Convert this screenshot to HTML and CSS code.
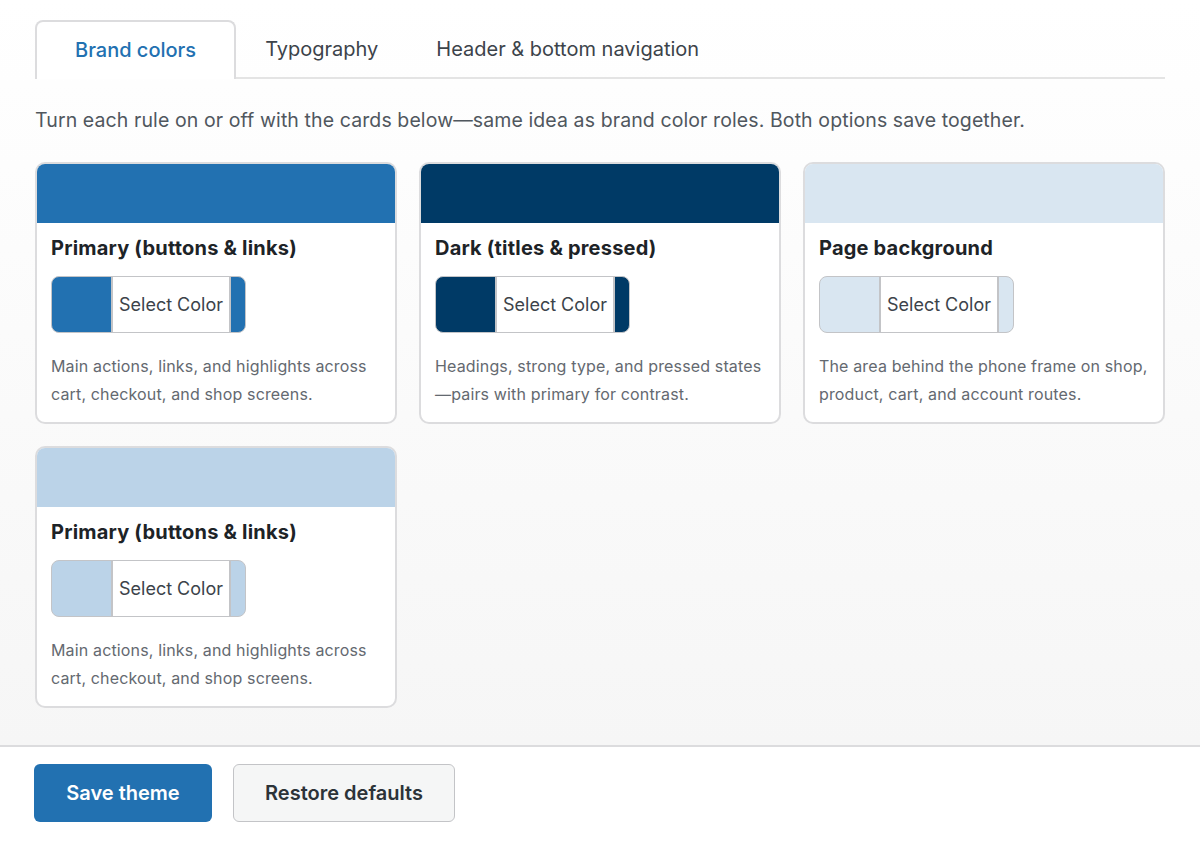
FILE: index.html
```html
<!DOCTYPE html>
<html lang="en">
<head>
<meta charset="utf-8">
<title>Theme settings</title>
<link rel="stylesheet" href="styles.css">
</head>
<body>
<div class="page">
  <main class="content">
    <nav class="tabs">
      <button class="tab tab-active">Brand colors</button>
      <button class="tab">Typography</button>
      <button class="tab">Header &amp; bottom navigation</button>
    </nav>

    <p class="intro">Turn each rule on or off with the cards below—same idea as brand color roles. Both options save together.</p>

    <section class="cards">
      <article class="card">
        <div class="band" style="background:#2271b1"></div>
        <div class="card-body">
          <h3 class="card-title">Primary (buttons &amp; links)</h3>
          <div class="picker" style="background:#2271b1"><span class="picker-label">Select Color</span></div>
          <p class="card-text">Main actions, links, and highlights across cart, checkout, and shop screens.</p>
        </div>
      </article>

      <article class="card">
        <div class="band" style="background:#003a66"></div>
        <div class="card-body">
          <h3 class="card-title">Dark (titles &amp; pressed)</h3>
          <div class="picker" style="background:#003a66"><span class="picker-label">Select Color</span></div>
          <p class="card-text">Headings, strong type, and pressed states —pairs with primary for contrast.</p>
        </div>
      </article>

      <article class="card">
        <div class="band" style="background:#d9e6f1"></div>
        <div class="card-body">
          <h3 class="card-title">Page background</h3>
          <div class="picker" style="background:#d9e6f1"><span class="picker-label">Select Color</span></div>
          <p class="card-text">The area behind the phone frame on shop, product, cart, and account routes.</p>
        </div>
      </article>

      <article class="card">
        <div class="band" style="background:#bbd3e8"></div>
        <div class="card-body">
          <h3 class="card-title">Primary (buttons &amp; links)</h3>
          <div class="picker" style="background:#bbd3e8"><span class="picker-label">Select Color</span></div>
          <p class="card-text">Main actions, links, and highlights across cart, checkout, and shop screens.</p>
        </div>
      </article>
    </section>
  </main>

  <footer class="actions">
    <button class="btn btn-primary">Save theme</button>
    <button class="btn btn-secondary">Restore defaults</button>
  </footer>
</div>
</body>
</html>
```

FILE: styles.css
```css
* {
  box-sizing: border-box;
}

html, body {
  margin: 0;
  padding: 0;
}

body {
  font-family: Inter, "Noto Sans", "Liberation Sans", sans-serif;
  color: #1d2327;
  background: #ffffff;
}

.page {
  width: 1200px;
  height: 844px;
  display: flex;
  flex-direction: column;
}

.content {
  height: 745px;
  padding: 20px 35px 0 35px;
  background: linear-gradient(to bottom, #ffffff 0%, #f6f6f6 100%);
}

/* Tabs */
.tabs {
  display: flex;
  height: 59px;
  border-bottom: 2px solid #e4e4e4;
}

.tab {
  font: inherit;
  font-size: 20px;
  line-height: 24px;
  color: #3c434a;
  background: none;
  border: 1px solid transparent;
  border-bottom: none;
  padding: 0 28px 2px 28px;
  height: 59px;
  margin-bottom: -2px;
  cursor: pointer;
}

.tab-active {
  color: #2271b1;
  font-weight: 500;
  background: #ffffff;
  border-color: #dcdcde;
  border-width: 2px 2px 0 2px;
  border-radius: 8px 8px 0 0;
  padding: 0 38px 2px 38px;
}

.intro {
  margin: 29px 0 0 0;
  font-size: 19.5px;
  line-height: 24px;
  letter-spacing: 0.1px;
  color: #50575e;
}

/* Color cards */
.cards {
  margin-top: 30px;
  display: grid;
  grid-template-columns: repeat(3, 1fr);
  gap: 22px;
}

.card {
  background: #ffffff;
  border: 2px solid #dcdcde;
  border-radius: 10px;
  overflow: hidden;
  height: 262px;
}

.band {
  height: 59px;
}

.card-body {
  padding: 12px 14px 0 14px;
}

.card-title {
  margin: 0;
  font-size: 20px;
  line-height: 26px;
  letter-spacing: 0.2px;
  font-weight: 700;
  color: #1d2327;
}

.picker {
  margin-top: 15px;
  width: 195px;
  height: 57px;
  border: 1px solid #c3c4c7;
  border-radius: 8px;
  overflow: hidden;
  padding: 0 14px 0 59px;
  display: flex;
}

.picker-label {
  flex: 1;
  display: flex;
  align-items: center;
  justify-content: center;
  background: #ffffff;
  border: 1px solid #c3c4c7;
  border-width: 0 2px;
  font-size: 18px;
  color: #3c434a;
}

.card-text {
  margin: 19px 0 0 0;
  font-size: 16px;
  line-height: 28px;
  letter-spacing: 0.15px;
  color: #646970;
}

/* Footer actions */
.actions {
  flex: 1;
  border-top: 2px solid #dcdcde;
  background: #ffffff;
  padding: 17px 34px 0 34px;
  display: flex;
  gap: 21px;
  align-items: flex-start;
}

.btn {
  font: inherit;
  font-size: 20px;
  font-weight: 600;
  height: 58px;
  border-radius: 6px;
  cursor: pointer;
}

.btn-primary {
  width: 178px;
  background: #2271b1;
  color: #ffffff;
  border: none;
}

.btn-secondary {
  width: 222px;
  background: #f5f6f6;
  color: #2c3338;
  border: 1px solid #c3c4c7;
}
```
